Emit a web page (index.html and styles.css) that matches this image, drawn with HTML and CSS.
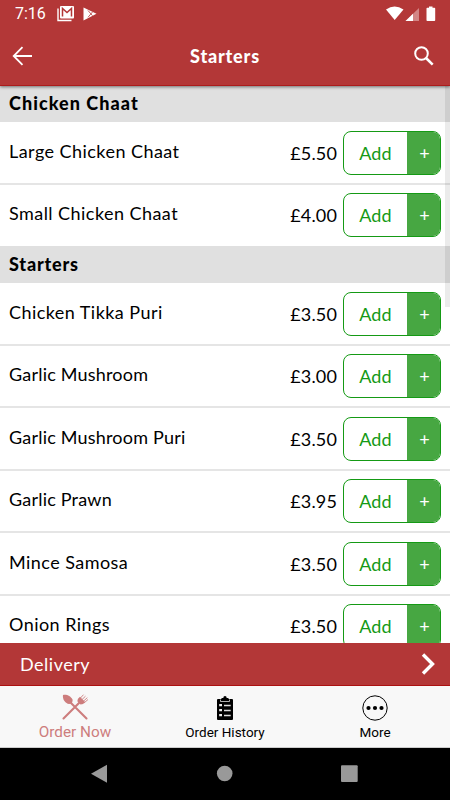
FILE: index.html
```html
<!DOCTYPE html>
<html lang="en">
<head>
<meta charset="utf-8">
<title>Starters</title>
<link rel="stylesheet" href="styles.css">
</head>
<body>
<div class="app">
  <header class="top">
    <div class="status">
      <span class="time">7:16</span>
      <svg class="mail" width="18" height="16" viewBox="0 0 18 16"><path d="M1 2.500V14.500H14.500" fill="none" stroke="#fff" stroke-width="1.4"/><rect x="3" y="0" width="14" height="12.500" rx="1" fill="#fff"/><path d="M5.500 10.500V2.500L10 6.500 14.500 2.500V10.500" fill="none" stroke="#b33737" stroke-width="1.500"/></svg>
      <svg class="play" width="14" height="14" viewBox="0 0 14 14"><path d="M.5 .5L13.500 6.800 .5 13.500Z" fill="#fff"/><path d="M5 3.500L9.500 8.700M5 10.300L9.500 5" stroke="#b33737" stroke-width=".8"/></svg>
      <svg class="signals" width="51" height="16" viewBox="0 0 51 16"><path d="M0 3.500Q8.500-2.500 17.500 3.500L8.700 14Z" fill="#fff"/><path d="M19.500 15L33 2V15Z" fill="#d28484"/><path d="M19.500 15L27 7.800V15Z" fill="#fff"/><path d="M40.500 2.500Q40.500 1.700 41.300 1.700H43V.5H46.500V1.700H48.400Q49.200 1.700 49.200 2.500V14.200Q49.200 15 48.400 15H41.300Q40.500 15 40.500 14.200Z" fill="#fff"/></svg>
    </div>
    <div class="bar">
      <svg width="22" height="20" viewBox="0 0 22 20" fill="none" stroke="#fff" stroke-width="1.800"><path d="M20 10H1.500M10.500 1.200L1.700 10 10.500 18.800"/></svg>
      <h1>Starters</h1>
      <svg width="20" height="20" viewBox="0 0 20 20" fill="none" stroke="#fff" stroke-width="2"><circle cx="7.500" cy="7.500" r="6.300"/><path d="M12 12L18.700 18.700" stroke-width="2.500"/></svg>
    </div>
  </header>
  <main class="list">
    <h2 class="first">Chicken Chaat</h2>
    <div class="row"><span class="name">Large Chicken Chaat</span><span class="price">£5.50</span><button class="add"><span>Add</span><b>+</b></button></div>
    <div class="row last"><span class="name">Small Chicken Chaat</span><span class="price">£4.00</span><button class="add"><span>Add</span><b>+</b></button></div>
    <h2>Starters</h2>
    <div class="row"><span class="name">Chicken Tikka Puri</span><span class="price">£3.50</span><button class="add"><span>Add</span><b>+</b></button></div>
    <div class="row"><span class="name tight">Garlic Mushroom</span><span class="price">£3.00</span><button class="add"><span>Add</span><b>+</b></button></div>
    <div class="row"><span class="name tight">Garlic Mushroom Puri</span><span class="price">£3.50</span><button class="add"><span>Add</span><b>+</b></button></div>
    <div class="row"><span class="name tight">Garlic Prawn</span><span class="price">£3.95</span><button class="add"><span>Add</span><b>+</b></button></div>
    <div class="row"><span class="name">Mince Samosa</span><span class="price">£3.50</span><button class="add"><span>Add</span><b>+</b></button></div>
    <div class="row"><span class="name">Onion Rings</span><span class="price">£3.50</span><button class="add"><span>Add</span><b>+</b></button></div>
    <i class="scroll"></i>
  </main>
  <div class="delivery"><span>Delivery</span>
    <svg width="15" height="22" viewBox="0 0 15 22"><path d="M2 1.500L11.500 11 2 20.500" fill="none" stroke="#fff" stroke-width="3.400"/></svg>
  </div>
  <nav class="tabs">
    <div class="tab active">
      <svg width="26" height="26" viewBox="0 0 26 26" fill="#cd7d7d" stroke="#cd7d7d"><path d="M1 1C4-.2 9 2 10.500 5.500 11 8 9.500 10 7 10 3 9.500 .3 5 1 1Z" stroke="none"/><path d="M8.500 8.500L24.500 24.500M1.500 24.500L17.500 8.500" stroke-width="2.100" stroke-linecap="round"/><path d="M15.300 7.200L18.500 10.500Q21.500 10.500 23 8L18 2.800Q15.300 4.500 15.300 7.200Z" stroke="none"/><path d="M17.500 5L21.500 .7M19 6.500L23.500 2.200M20.800 7.800L25.300 3.700M22 9L26 5.500" stroke-width=".9" fill="none"/></svg>
      <span>Order Now</span>
    </div>
    <div class="tab">
      <svg width="16" height="24" viewBox="0 0 16 24"><path d="M1 3H4.500V2H6.300Q6.300 0 8 0T9.700 2H11.500V3H15Q16 3 16 4V23Q16 24 15 24H1Q0 24 0 23V4Q0 3 1 3Z" fill="#000"/><path d="M3.500 3.500V5.500H12.500V3.500" fill="none" stroke="#ddd" stroke-width=".8"/><path d="M2.200 9.200H5M2.200 14.200H5M2.200 19.200H5" stroke="#eee" stroke-width="2.200"/><path d="M7 9.500H13.700M7 14.500H13.700M7 19.500H13.700" stroke="#ddd" stroke-width="1.300"/></svg>
      <span>Order History</span>
    </div>
    <div class="tab">
      <svg width="26" height="26" viewBox="0 0 26 26"><circle cx="13" cy="13" r="12.200" fill="none" stroke="#000" stroke-width="1"/><circle cx="6.500" cy="13" r="2.100"/><circle cx="13" cy="13" r="2.100"/><circle cx="19.500" cy="13" r="2.100"/></svg>
      <span>More</span>
    </div>
  </nav>
  <footer class="system">
    <svg width="450" height="52" viewBox="0 0 450 52" fill="#999"><path d="M91 25.700L107 16.700V34.700Z"/><circle cx="224.700" cy="25.500" r="7.800"/><rect x="341" y="17.300" width="16.700" height="16.700" rx="1"/></svg>
  </footer>
</div>
</body>
</html>
```
FILE: styles.css
```css
* { box-sizing: border-box; }
body { margin: 0; font-family: Lato, sans-serif; color: #000; }
svg { display: block; flex: none; }
.app { width: 450px; height: 800px; display: flex; flex-direction: column; overflow: hidden; background: #fff; }
.top { height: 86px; flex: none; background: #b33737; color: #fff; border-bottom: 1px solid #ac1c1c; box-shadow: 0 1px 3px rgba(0,0,0,.5); position: relative; z-index: 2; }
.status { height: 28px; display: flex; align-items: center; padding: 0 13px 0 15px; }
.time { font: 400 16px/28px Roboto, sans-serif; width: 42px; }
.mail { margin-top: -1px; }
.play { margin-left: 8px; margin-top: -1px; }
.signals { margin-left: auto; margin-top: -1px; }
.bar { height: 56px; display: flex; align-items: center; justify-content: space-between; padding: 0 16px 0 12px; }
h1 { margin: 0 -2px 0 0; font-size: 18px; font-weight: 900; letter-spacing: .8px; }
.list { height: 556.500px; flex: none; overflow: hidden; position: relative; }
h2 { margin: 0; height: 37px; background: #e0e0e0; padding-left: 9px; font-size: 18px; line-height: 36px; font-weight: 900; letter-spacing: .8px; }
.first { height: 36px; line-height: 35px; letter-spacing: 1.050px; }
.row { height: 62.500px; display: flex; align-items: center; padding: 1px 9px 0; border-bottom: 2px solid #e5e5e5; }
.row.last { height: 61.500px; border-bottom: 0; padding-top: 0; }
.name { flex: 1; font-size: 18px; letter-spacing: .450px; margin-top: -4px; }
.tight { letter-spacing: .2px; }
.price { font-size: 18px; letter-spacing: .15px; margin-right: 6px; }
.add { width: 98px; height: 44px; display: flex; padding: 0; overflow: hidden; border: 1px solid #159a15; border-radius: 8px; background: #fff; font: 18px/42px Lato, sans-serif; color: #159a15; }
.add span { flex: 1; letter-spacing: .2px; }
.add b { width: 33px; padding-left: 2px; background: #47a742; color: #fff; font-weight: 400; }
.scroll { position: absolute; top: 0; right: 0; width: 5px; height: 221px; background: rgba(0,0,0,.08); }
.delivery { height: 43.500px; flex: none; background: #b33737; color: #fff; display: flex; align-items: center; justify-content: space-between; padding: 0 14px 0 20px; border-bottom: 1px solid #ac1010; font-size: 18px; letter-spacing: .5px; }
.tabs { height: 62px; flex: none; display: grid; grid-template-columns: repeat(3, 1fr); background: #f8f8f8; border-bottom: 1px solid #ccc; font: 13.500px/18px Roboto, sans-serif; }
.tab { display: flex; flex-direction: column; align-items: center; justify-content: flex-end; gap: 3px; padding-bottom: 6px; }
.tab:last-child { gap: 2px; }
.active { color: #cd7d7d; font-size: 15.300px; }
.system { flex: 1; background: #000; }
```
